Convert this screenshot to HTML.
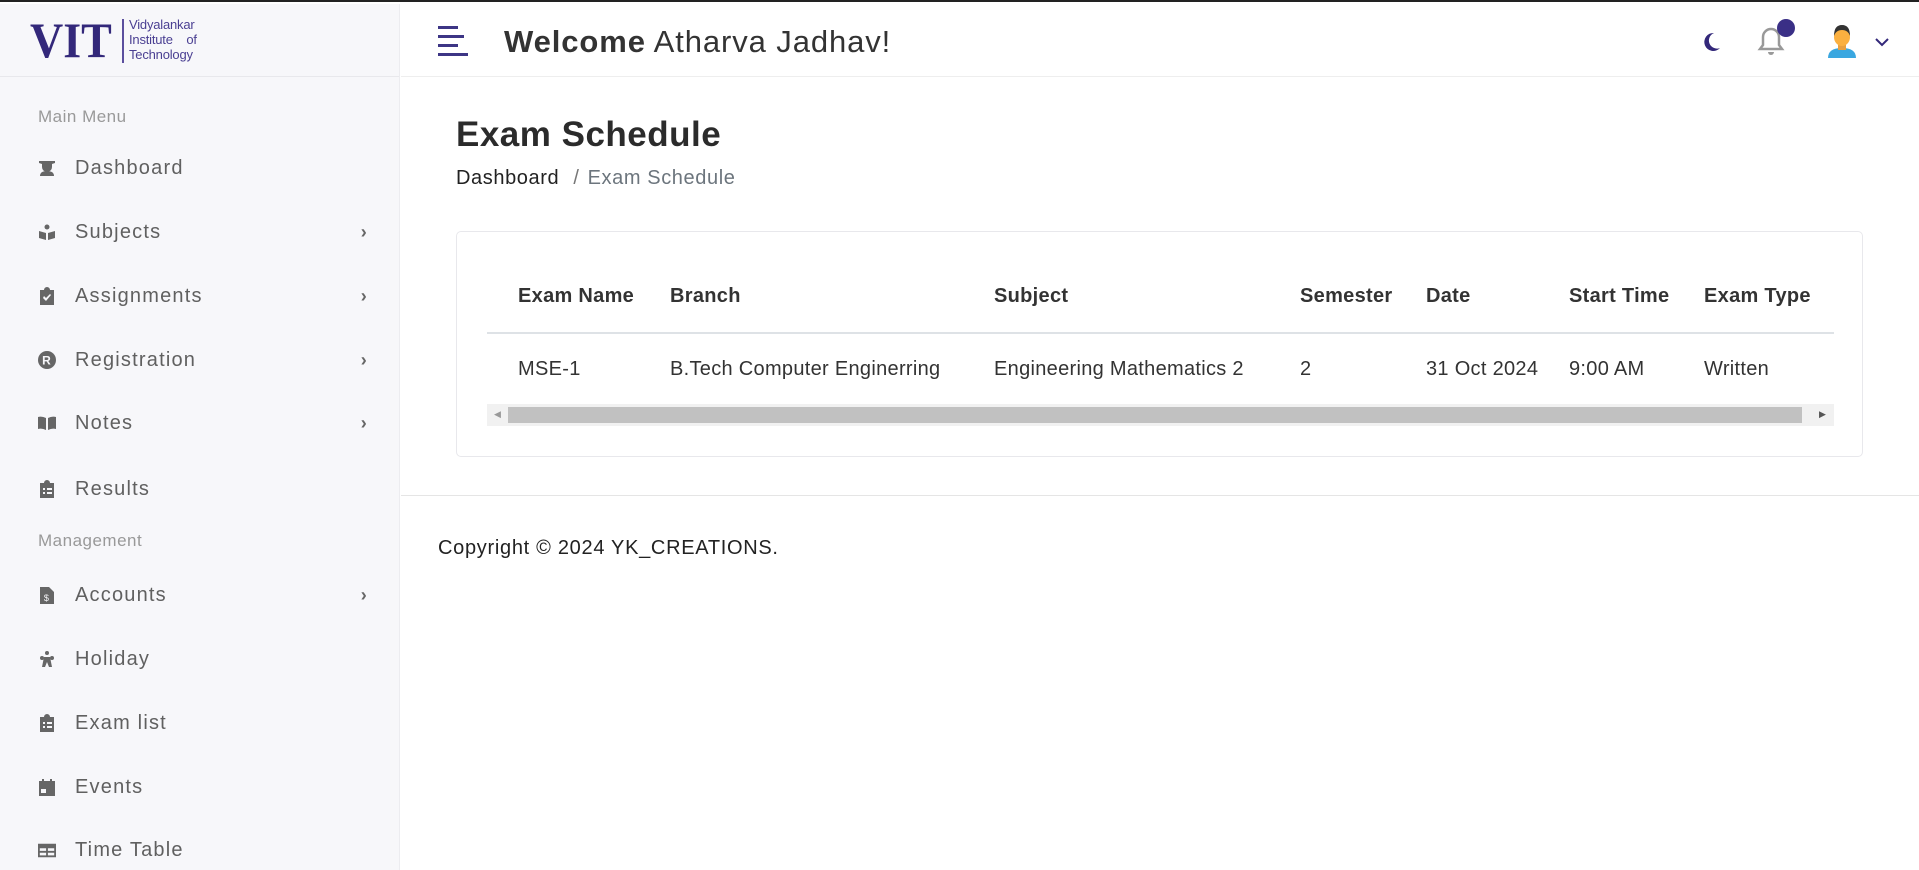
<!DOCTYPE html>
<html><head><meta charset="utf-8"><style>
*{margin:0;padding:0;box-sizing:border-box}
body{width:1919px;height:868px;overflow:hidden;background:#fff;font-family:"Liberation Sans",sans-serif;position:relative;border-top:2px solid #222}
.sb{position:absolute;left:0;top:2px;width:400px;height:866px;background:#f7f7fa;border-right:1px solid #ececf0}
.logo{height:73px;border-bottom:1px solid #e8e8ec;position:relative}
.lbl{position:absolute;left:38px;font-size:17px;color:#999;letter-spacing:.5px}
.it{position:absolute;left:38px;width:330px;height:30px;display:flex;align-items:center;font-size:20px;color:#606060;letter-spacing:1.2px}
.it svg{width:18px;height:18px;margin-right:19px;fill:#666}
.it .ch{position:absolute;right:0;top:5px;font-size:18px;font-weight:bold;color:#666}
.hd{position:absolute;left:401px;top:2px;right:0;height:73px;border-bottom:1px solid #eee}
.abs{position:absolute}
.th,.td{font-size:20px;color:#333;white-space:nowrap;letter-spacing:.3px}
.th span,.td span{position:absolute;white-space:nowrap}
</style></head><body>
<div class="sb">
 <div class="logo">
  <div class="abs" style="left:30px;top:12px;font-family:'Liberation Serif',serif;font-weight:bold;font-size:50px;color:#33287a;line-height:48px;transform:scaleX(0.92);transform-origin:left">VIT</div>
  <div class="abs" style="left:122px;top:15px;width:2px;height:44px;background:#5b4f9e"></div>
  <div class="abs" style="left:129px;top:13px;font-size:13px;line-height:15px;color:#4a3f92;letter-spacing:-.2px">Vidyalankar<br>Institute&nbsp;&nbsp;&nbsp;&nbsp;of<br>Technology</div>
 </div>
 <div class="lbl" style="top:103px">Main Menu</div>
 <div class="it" style="top:149px"><svg viewBox="0 0 18 18"><path d="M1 2h16v2l-3 1v3a5 5 0 0 1-10 0V5L1 4zM2 17q0-5 7-5t7 5z"/></svg>Dashboard</div>
 <div class="it" style="top:213px"><svg viewBox="0 0 18 18"><circle cx="9" cy="4" r="2.5"/><path d="M1 8l7 2v7l-7-2zM17 8l-7 2v7l7-2z"/></svg>Subjects<span class="ch">›</span></div>
 <div class="it" style="top:277px"><svg viewBox="0 0 18 18"><path d="M2 3h4a3 3 0 0 1 6 0h4v15H2zm3 8l3 3 5-6-1-1-4 4-2-2z"/></svg>Assignments<span class="ch">›</span></div>
 <div class="it" style="top:341px"><svg viewBox="0 0 18 18"><circle cx="9" cy="9" r="9"/><text x="9" y="13.5" font-size="12" font-weight="bold" fill="#f7f7fa" text-anchor="middle" font-family="Liberation Sans">R</text></svg>Registration<span class="ch">›</span></div>
 <div class="it" style="top:404px"><svg viewBox="0 0 18 18"><path d="M0 3q4-1 8 1v12q-4-2-8-1zM18 3q-4-1-8 1v12q4-2 8-1z"/></svg>Notes<span class="ch">›</span></div>
 <div class="it" style="top:470px"><svg viewBox="0 0 18 18"><path d="M2 3h4a3 3 0 0 1 6 0h4v15H2zm3 5v2h2V8zm4 0v2h5V8zm-4 4v2h2v-2zm4 0v2h5v-2z"/></svg>Results</div>
 <div class="lbl" style="top:527px">Management</div>
 <div class="it" style="top:576px"><svg viewBox="0 0 18 18"><path d="M2 1h9l5 5v12H2z"/><text x="9" y="15" font-size="9" fill="#f7f7fa" text-anchor="middle">$</text></svg>Accounts<span class="ch">›</span></div>
 <div class="it" style="top:640px"><svg viewBox="0 0 18 18"><circle cx="9" cy="3" r="2"/><circle cx="4" cy="8" r="2"/><circle cx="14" cy="8" r="2"/><path d="M6 7h6l2 10h-3l-2-5-2 5H4z"/></svg>Holiday</div>
 <div class="it" style="top:704px"><svg viewBox="0 0 18 18"><path d="M2 3h4a3 3 0 0 1 6 0h4v15H2zm3 5v2h2V8zm4 0v2h5V8zm-4 4v2h2v-2zm4 0v2h5v-2z"/></svg>Exam list</div>
 <div class="it" style="top:768px"><svg viewBox="0 0 18 18"><path d="M1 3h16v15H1zM4 1h2v3H4zM12 1h2v3h-2zM3 11v4h5v-4z"/></svg>Events</div>
 <div class="it" style="top:831px"><svg viewBox="0 0 20 18"><path d="M0 2h20v15H0zm2 5v3h7V7zm9 0v3h7V7zm-9 5v3h7v-3zm9 0v3h7v-3z"/></svg>Time Table</div>
</div>
<div class="hd">
 <div class="abs" style="left:37px;top:22px;width:20px;height:3px;background:#3d3585"></div>
 <div class="abs" style="left:37px;top:31px;width:26px;height:3px;background:#3d3585"></div>
 <div class="abs" style="left:37px;top:40px;width:20px;height:3px;background:#3d3585"></div>
 <div class="abs" style="left:37px;top:49px;width:30px;height:3px;background:#3d3585"></div>
 <div class="abs" style="left:103px;top:20px;font-size:31px;color:#333;letter-spacing:.9px"><b>Welcome</b> Atharva Jadhav!</div>
 <svg class="abs" style="left:1299px;top:27px" width="22" height="22" viewBox="0 0 22 22"><path d="M14 2a9 9 0 1 0 6 15A8 8 0 0 1 14 2z" fill="#33287a"/></svg>
 <svg class="abs" style="left:1356px;top:22px" width="28" height="32" viewBox="0 0 28 32"><path d="M14 3a8 8 0 0 0-8 8v8l-3 4h22l-3-4v-8a8 8 0 0 0-8-8z" fill="none" stroke="#999" stroke-width="2.5"/><path d="M11 26a3 3 0 0 0 6 0z" fill="#999"/></svg>
 <div class="abs" style="left:1376px;top:15px;width:18px;height:18px;border-radius:50%;background:#3a2f86"></div>
 <svg class="abs" style="left:1426px;top:20px" width="30" height="34" viewBox="0 0 30 34"><path d="M1 34q0-10 14-10t14 10z" fill="#3aa7e0"/><rect x="11" y="18" width="8" height="8" fill="#e8a040"/><ellipse cx="15" cy="13" rx="8" ry="9" fill="#fbb040"/><path d="M7 12q0-11 8-11t8 11q-2-6-8-6t-8 6z" fill="#333"/></svg>
 <svg class="abs" style="left:1473px;top:33px" width="16" height="10" viewBox="0 0 16 10"><path d="M2 2l6 6 6-6" fill="none" stroke="#33287a" stroke-width="2"/></svg>
</div>
<div class="abs" style="left:456px;top:113px;font-size:35px;font-weight:bold;color:#2b2b2b;letter-spacing:.5px">Exam Schedule</div>
<div class="abs" style="left:456px;top:165px;font-size:20px;color:#222;letter-spacing:.6px">Dashboard <span style="color:#777;margin:0 8px">/</span><span style="color:#6c757d">Exam Schedule</span></div>
<div class="abs" style="left:456px;top:229px;width:1407px;height:226px;border:1px solid #e8e8ec;border-radius:5px;background:#fff"></div>
<div class="abs" style="left:487px;top:330px;width:1347px;height:2px;background:#dee2e6"></div>
<div class="abs" style="left:487px;top:402px;width:1347px;height:22px;background:#f1f1f1"></div>
<div class="abs" style="left:508px;top:405px;width:1294px;height:16px;background:#c1c1c1"></div>
<div class="abs" style="left:494px;top:407px;font-size:9px;color:#999">◀</div>
<div class="abs" style="left:1819px;top:407px;font-size:9px;color:#555">▶</div>
<div class="abs th" style="top:283px;left:0;font-weight:bold">
 <span style="left:518px">Exam Name</span><span style="left:670px">Branch</span><span style="left:994px">Subject</span><span style="left:1300px">Semester</span><span style="left:1426px">Date</span><span style="left:1569px">Start Time</span><span style="left:1704px">Exam Type</span>
</div>
<div class="abs td" style="top:356px;left:0">
 <span style="left:518px">MSE-1</span><span style="left:670px">B.Tech Computer Enginerring</span><span style="left:994px">Engineering Mathematics 2</span><span style="left:1300px">2</span><span style="left:1426px">31 Oct 2024</span><span style="left:1569px">9:00 AM</span><span style="left:1704px">Written</span>
</div>
<div class="abs" style="left:401px;top:493px;right:0;height:1px;background:#e5e5e5"></div>
<div class="abs" style="left:438px;top:535px;font-size:20px;color:#222;letter-spacing:.7px">Copyright © 2024 YK_CREATIONS.</div>
</body></html>
